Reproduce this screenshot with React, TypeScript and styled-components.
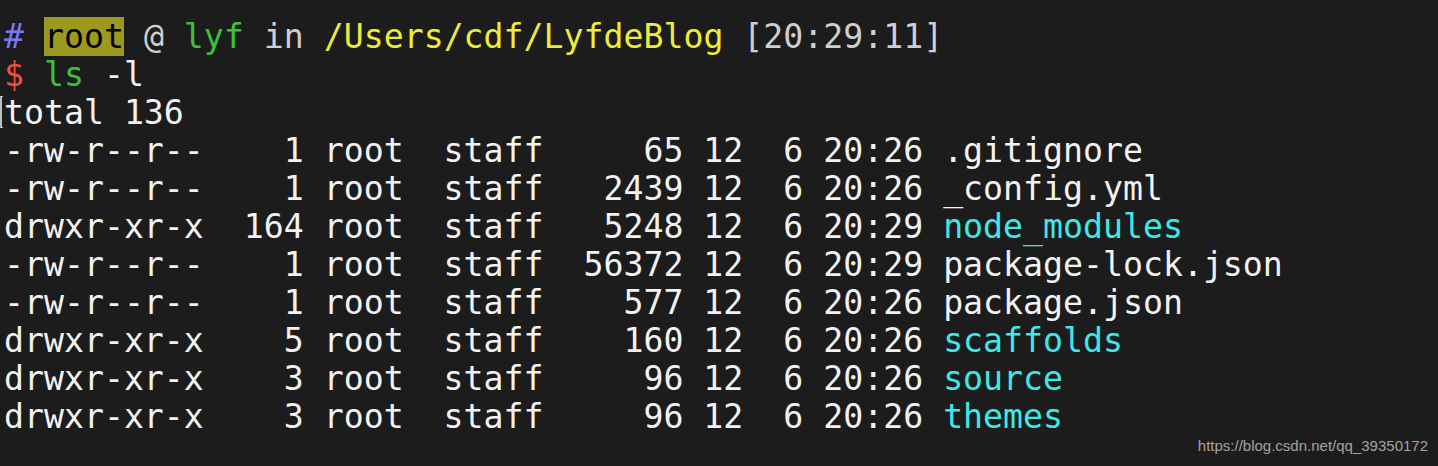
import React from "react";
import styled, { createGlobalStyle } from "styled-components";

const Global = createGlobalStyle`
  html, body { margin: 0; padding: 0; background: #1c1c1c; }
  #root { width: 1438px; height: 466px; }
`;

const Terminal = styled.div`
  position: relative;
  width: 1438px;
  height: 466px;
  box-sizing: border-box;
  background: #1c1c1c;
  padding: 18px 0 0 4px;
  font-family: "DejaVu Sans Mono", "Liberation Mono", monospace;
  font-size: 33.2px;
  line-height: 38px;
  color: #f2f2f2;
  white-space: pre;
  overflow: hidden;
`;

const Line = styled.div<{ $mark?: boolean }>`
  position: relative;
  height: 38px;
  ${(p) =>
    p.$mark
      ? `&::before {
    content: "";
    position: absolute;
    left: -4px;
    top: 2px;
    width: 3px;
    height: 32px;
    border-left: 2px solid #bdbdbd;
    border-top: 1px solid #bdbdbd;
    border-bottom: 1px solid #bdbdbd;
    box-sizing: border-box;
  }`
      : ""}
`;

const Seg = styled.span<{ $c?: string; $bg?: string }>`
  color: ${(p) => p.$c || "inherit"};
  background: ${(p) => p.$bg || "transparent"};
`;

const Watermark = styled.div`
  position: absolute;
  right: 10px;
  bottom: 10px;
  font-family: "Liberation Sans", Arial, sans-serif;
  font-size: 15px;
  line-height: 20px;
  color: #a3a3a3;
  white-space: nowrap;
`;

const C = {
  blue: "#7878f4",
  olive: "#9c9a1e",
  gray: "#cfcfcf",
  green: "#3cc03c",
  yellow: "#ecec3a",
  red: "#f0503a",
  cyan: "#3fe8e8",
};

type Row = { perm: string; n: string; size: string; time: string; name: string; dir?: boolean };

const rows: Row[] = [
  { perm: "-rw-r--r--", n: "1", size: "65", time: "20:26", name: ".gitignore" },
  { perm: "-rw-r--r--", n: "1", size: "2439", time: "20:26", name: "_config.yml" },
  { perm: "drwxr-xr-x", n: "164", size: "5248", time: "20:29", name: "node_modules", dir: true },
  { perm: "-rw-r--r--", n: "1", size: "56372", time: "20:29", name: "package-lock.json" },
  { perm: "-rw-r--r--", n: "1", size: "577", time: "20:26", name: "package.json" },
  { perm: "drwxr-xr-x", n: "5", size: "160", time: "20:26", name: "scaffolds", dir: true },
  { perm: "drwxr-xr-x", n: "3", size: "96", time: "20:26", name: "source", dir: true },
  { perm: "drwxr-xr-x", n: "3", size: "96", time: "20:26", name: "themes", dir: true },
];

export default function App() {
  return (
    <>
      <Global />
      <Terminal>
        <Line>
          <Seg $c={C.blue}>#</Seg> <Seg $c="#000" $bg={C.olive}>root</Seg>{" "}
          <Seg $c={C.gray}>@</Seg> <Seg $c={C.green}>lyf</Seg>{" "}
          <Seg $c={C.gray}>in</Seg> <Seg $c={C.yellow}>/Users/cdf/LyfdeBlog</Seg>{" "}
          <Seg $c={C.gray}>[20:29:11]</Seg>
        </Line>
        <Line>
          <Seg $c={C.red}>$</Seg> <Seg $c={C.green}>ls</Seg> <Seg>-l</Seg>
        </Line>
        <Line $mark>total 136</Line>
        {rows.map((r) => (
          <Line key={r.name}>
            {r.perm} {r.n.padStart(4)} root  staff {r.size.padStart(6)} 12  6 {r.time}{" "}
            <Seg $c={r.dir ? C.cyan : undefined}>{r.name}</Seg>
          </Line>
        ))}
        <Watermark>https://blog.csdn.net/qq_39350172</Watermark>
      </Terminal>
    </>
  );
}
